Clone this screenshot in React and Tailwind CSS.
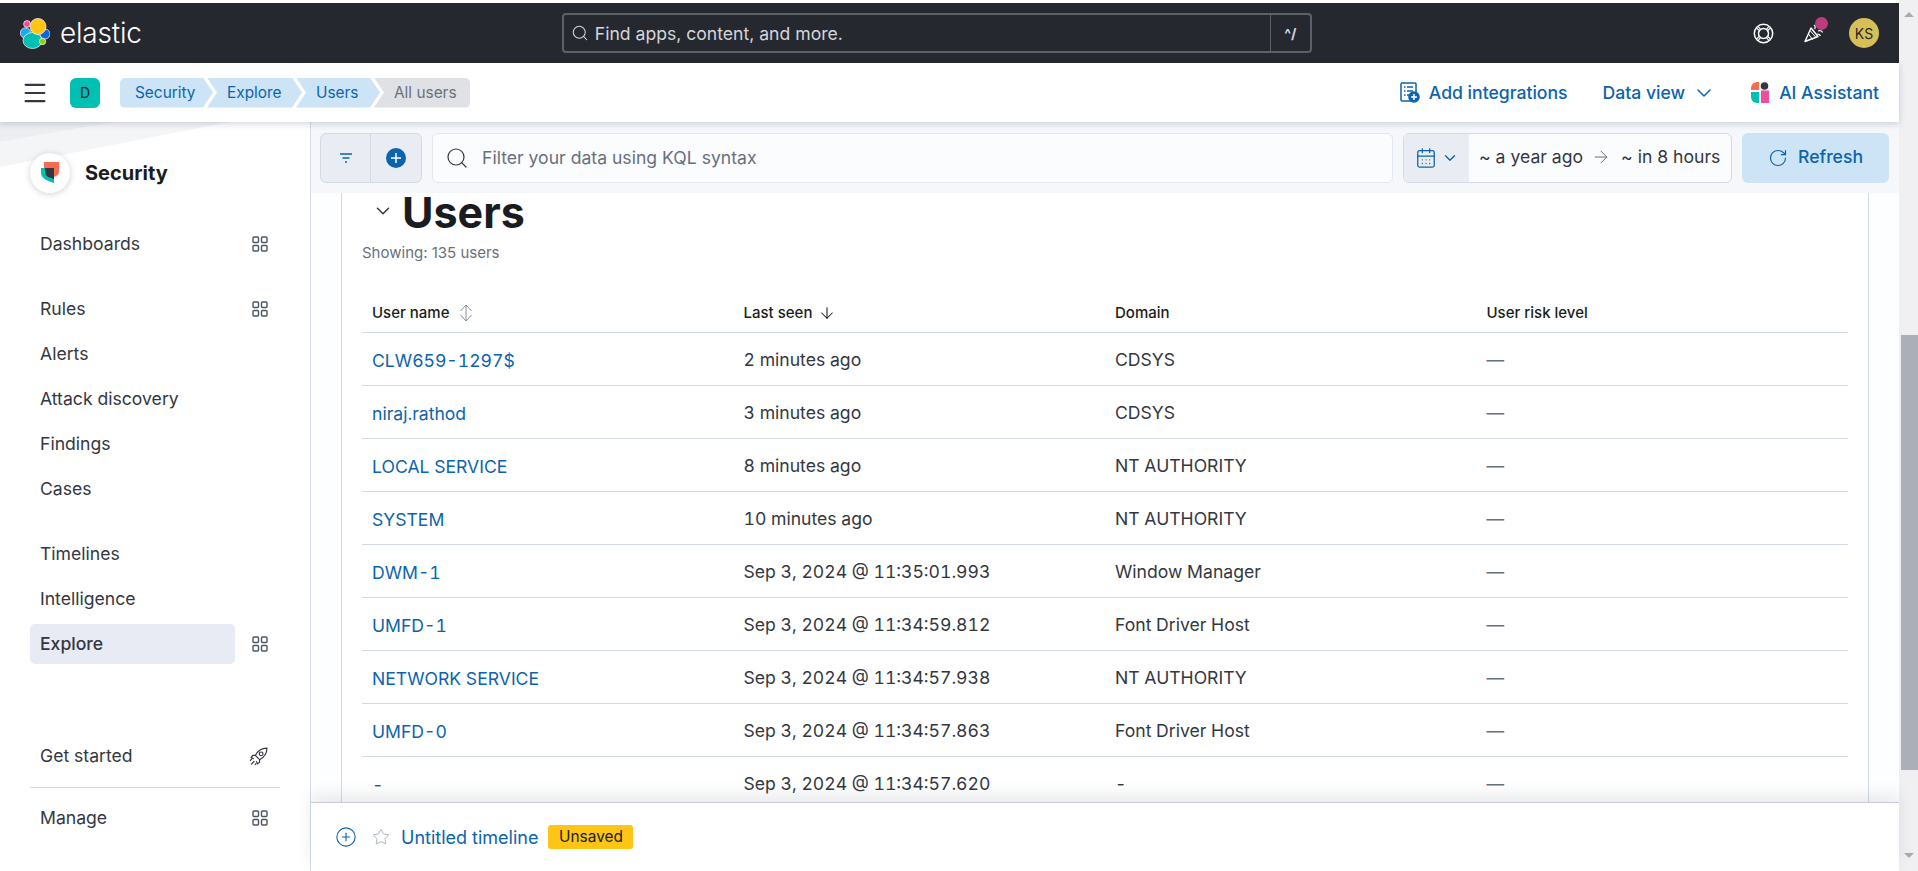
import React from 'react';
import { ChevronDown, CalendarDays, ArrowRight, ArrowDown, RotateCw, Search, Star, CirclePlus, Menu } from 'lucide-react';

const FONT = "font-['Inter','Noto_Sans',sans-serif]";

const users = [
  { name: 'CLW659-1297$', seen: '2 minutes ago', domain: 'CDSYS' },
  { name: 'niraj.rathod', seen: '3 minutes ago', domain: 'CDSYS' },
  { name: 'LOCAL SERVICE', seen: '8 minutes ago', domain: 'NT AUTHORITY' },
  { name: 'SYSTEM', seen: '10 minutes ago', domain: 'NT AUTHORITY' },
  { name: 'DWM-1', seen: 'Sep 3, 2024 @ 11:35:01.993', domain: 'Window Manager' },
  { name: 'UMFD-1', seen: 'Sep 3, 2024 @ 11:34:59.812', domain: 'Font Driver Host' },
  { name: 'NETWORK SERVICE', seen: 'Sep 3, 2024 @ 11:34:57.938', domain: 'NT AUTHORITY' },
  { name: 'UMFD-0', seen: 'Sep 3, 2024 @ 11:34:57.863', domain: 'Font Driver Host' },
  { name: '-', seen: 'Sep 3, 2024 @ 11:34:57.620', domain: '-' },
];

function GridIcon() {
  return (
    <svg width="16" height="16" viewBox="0 0 16 16" fill="none" stroke="#4b5563" strokeWidth="1.4">
      <rect x="1" y="1" width="5.5" height="5.5" rx="1" />
      <rect x="9.5" y="1" width="5.5" height="5.5" rx="1" />
      <rect x="1" y="9.5" width="5.5" height="5.5" rx="1" />
      <rect x="9.5" y="9.5" width="5.5" height="5.5" rx="1" />
    </svg>
  );
}

function RocketIcon() {
  return (
    <svg width="19" height="19" viewBox="0 0 18 18" fill="none" stroke="#343741" strokeWidth="1.1">
      <path d="M17 1c-5 0-9 3-11 7l4 4c4-2 7-6 7-11z" />
      <circle cx="11.5" cy="6.5" r="1.8" />
      <path d="M6 8H3.5L2 10l2.5 1M10 12v2.5L8 16l-1-2.5" />
      <path d="M1 13l2-2M2 16.5l3-3M5.5 17l1.5-1.5" />
    </svg>
  );
}

function ElasticLogo() {
  return (
    <svg width="30" height="32" viewBox="0 0 30 32" stroke="#fff" strokeWidth="0.7">
      <circle cx="7" cy="7" r="3.4" fill="#f04e98" />
      <circle cx="5.5" cy="16" r="5.2" fill="#1ba9f5" />
      <circle cx="25" cy="17" r="5" fill="#0b64dd" />
      <ellipse cx="12.5" cy="23.5" rx="9.5" ry="8" fill="#00bfb3" />
      <circle cx="22.5" cy="24.5" r="3.2" fill="#93c90e" />
      <circle cx="18" cy="9.5" r="8" fill="#fec514" />
    </svg>
  );
}

function SecurityLogo() {
  return (
    <svg width="18" height="22" viewBox="0 0 18 22">
      <path d="M3 0H18V10C18 12 16 14 13 15V6H3z" fill="#f86b4f" />
      <path d="M0 6H13V21C6 19 0 16 0 11z" fill="#00bfb3" />
      <path d="M4 6H13V17L7 15C5 13 4 12 4 10z" fill="#343741" />
    </svg>
  );
}

function AiIcon() {
  return (
    <svg width="18" height="21" viewBox="0 0 18 21">
      <path d="M0 8V6a6 6 0 0 1 6-6h2v8z" fill="#f86b4f" />
      <circle cx="13.5" cy="4" r="3.8" fill="#343741" />
      <path d="M0 10h8v11H6a6 6 0 0 1-6-6z" fill="#00bfb3" />
      <rect x="10" y="8.5" width="8" height="12.5" fill="#f04e98" />
    </svg>
  );
}

function IntegrationsIcon() {
  return (
    <svg width="20" height="21" viewBox="0 0 20 21" fill="none" stroke="#0b64ad" strokeWidth="1.5">
      <rect x="1" y="1" width="15" height="18" rx="1" />
      <path d="M4 5h1.5M7 5h6M4 9h1.5M7 9h6M4 13h1.5M7 13h2" />
      <circle cx="14" cy="15" r="5.8" fill="#0b64ad" stroke="none" />
      <path d="M14 12v6M11 15h6" stroke="#fff" />
    </svg>
  );
}

function LifeRing() {
  return (
    <svg width="21" height="21" viewBox="0 0 21 21" fill="none" stroke="#fff" strokeWidth="1.5">
      <circle cx="10.5" cy="10.5" r="9.2" />
      <circle cx="10.5" cy="10.5" r="5" />
      <path d="M5 3.4l3 3.4M3.4 5l3.4 3M16 3.4l-3 3.4M17.6 5l-3.4 3M5 17.6l3-3.4M3.4 16l3.4-3M16 17.6l-3-3.4M17.6 16l-3.4-3" strokeWidth="1.1" />
    </svg>
  );
}

function PartyIcon() {
  return (
    <svg width="20" height="20" viewBox="0 0 20 20" fill="none" stroke="#fff" strokeWidth="1.4" strokeLinejoin="round">
      <path d="M1 18.5L7 5l7 8.5z" />
      <path d="M4.5 11l4 5.5M6 7.5l6 7" strokeWidth="1" />
      <path d="M10 2c1.5 1 1.5 3 .5 4M14 8c2-1 4 0 4.5 1.5M13 11c1.5 0 3 .5 3.5 2" strokeWidth="1.2" />
    </svg>
  );
}

function SortIcon() {
  return (
    <svg width="14" height="18" viewBox="0 0 14 18" fill="none" stroke="#8a8f99" strokeWidth="1">
      <path d="M7 1v16M7 1L1.5 7M7 1l5.5 6M7 17l-5.5-6M7 17l5.5-6" />
    </svg>
  );
}

function NavItem({ label, grid, icon, active, className = '' }) {
  return (
    <div className={`flex items-center h-10 pl-[30px] pr-[42px] ${className}`}>
      <div className={`flex-1 h-10 flex items-center pl-2.5 rounded-[5px] text-[17.6px] text-[#343741] ${active ? 'bg-[#e8ebf3] font-medium' : ''}`}>
        {label}
      </div>
      <div className="w-[33px] flex justify-end">
        {grid && <GridIcon />}
        {icon}
      </div>
    </div>
  );
}

function Crumb({ label, width, last, first }) {
  if (last) {
    return (
      <div className={`h-[30px] ${width} -ml-1.5 pl-5 pt-px flex items-center rounded-r-[5px] bg-[#e0e1e5] text-[#69707d] text-[15.4px] [clip-path:polygon(0_0,100%_0,100%_100%,0_100%,10px_50%)]`}>
        {label}
      </div>
    );
  }
  return (
    <div className={`h-[30px] ${width} pt-px flex items-center text-[#0b64ad] text-[15.4px] bg-[#cce4f5] ${first ? 'pl-[15px] rounded-l-[5px] [clip-path:polygon(0_0,calc(100%-10px)_0,100%_50%,calc(100%-10px)_100%,0_100%)]' : '-ml-1.5 pl-5 [clip-path:polygon(0_0,calc(100%-10px)_0,100%_50%,calc(100%-10px)_100%,0_100%,10px_50%)]'}`}>
      {label}
    </div>
  );
}

export default function App() {
  return (
    <div className={`${FONT} h-[871px] w-full flex overflow-hidden bg-white`}>
      <div className="flex-1 min-w-0 flex flex-col pt-[3px]">
        {/* Top dark header */}
        <header className="h-[60px] shrink-0 bg-[#25282f] flex items-center pl-5 pr-5 relative">
          <ElasticLogo />
          <span className="ml-2.5 text-[28px] font-light text-white leading-none tracking-[-0.2px]">elastic</span>
          <div className="ml-[420px] w-[750px] h-10 border-2 border-[#5d6068] rounded-[4px] flex items-center text-[#d4d6db]">
            <Search className="w-[18px] h-[18px] ml-[7px] mr-[6px]" strokeWidth={1.4} />
            <span className="flex-1 text-[17.6px] pt-0.5">Find apps, content, and more.</span>
            <span className="w-10 h-full border-l border-[#5d6068] flex items-center justify-center text-[14px] font-bold">^/</span>
          </div>
          <div className="ml-auto flex items-center">
            <LifeRing />
            <div className="relative ml-[30px]">
              <PartyIcon />
              <span className="absolute -top-[6px] -right-[4px] w-[13px] h-[13px] rounded-full bg-[#bd3c7e]" />
            </div>
            <div className="ml-[25px] w-[30px] h-[30px] rounded-full bg-[#d6bf57] flex items-center justify-center text-[14px] text-[#25282f]">KS</div>
          </div>
        </header>

        {/* Breadcrumb bar */}
        <div className="h-[59px] shrink-0 bg-white flex items-center pl-[21px] pr-5 relative z-20 shadow-[0_2px_6px_rgba(60,70,90,0.22)]">
          <Menu className="w-[28px] h-[28px] text-[#343741]" strokeWidth={1.9} />
          <div className="ml-[21px] w-[30px] h-[30px] rounded-[6px] bg-[#00bfb3] flex items-center justify-center text-[14px] text-[#1a1c21]">D</div>
          <div className="ml-5 flex items-center">
            <Crumb label="Security" width="w-[93px]" first />
            <Crumb label="Explore" width="w-[95px]" />
            <Crumb label="Users" width="w-[84px]" />
            <Crumb label="All users" width="w-[96px]" last />
          </div>
          <div className="ml-auto flex items-center text-[17.6px] text-[#0b64ad] font-[450] pt-px">
            <IntegrationsIcon />
            <span className="ml-[9px]">Add integrations</span>
            <span className="ml-[35px]">Data view</span>
            <ChevronDown className="w-[24px] h-[24px] ml-[7px]" strokeWidth={1.5} />
            <span className="ml-[35px] mr-[10px]"><AiIcon /></span>
            <span>AI Assistant</span>
          </div>
        </div>

        <div className="flex-1 min-h-0 flex">
          {/* Sidebar */}
          <aside className="w-[311px] shrink-0 border-r border-[#d3dae6] bg-white relative flex flex-col">
            <svg className="absolute top-0 left-0" width="230" height="45" viewBox="0 0 230 45">
              <path d="M0 20L115 0H230L0 45z" fill="#f4f5f7" />
              <path d="M0 0H115L0 20z" fill="#eceef1" />
            </svg>
            <div className="relative mt-[31px] ml-[30px] flex items-center">
              <div className="w-10 h-10 rounded-full bg-white shadow-[0_1px_6px_rgba(60,70,90,0.25)] flex items-center justify-center">
                <SecurityLogo />
              </div>
              <span className="ml-[15px] text-[20px] font-bold text-[#1a1c21]">Security</span>
            </div>
            <NavItem label="Dashboards" grid className="mt-[31px]" />
            <NavItem label="Rules" grid className="mt-[25px]" />
            <NavItem label="Alerts" className="mt-[5px]" />
            <NavItem label="Attack discovery" className="mt-[5px]" />
            <NavItem label="Findings" className="mt-[5px]" />
            <NavItem label="Cases" className="mt-[5px]" />
            <NavItem label="Timelines" className="mt-[25px]" />
            <NavItem label="Intelligence" className="mt-[5px]" />
            <NavItem label="Explore" grid active className="mt-[5px]" />
            <NavItem label="Get started" icon={<RocketIcon />} className="mt-[72px]" />
            <div className="mt-[11px] ml-[30px] w-[250px] border-t border-[#d3dae6]" />
            <NavItem label="Manage" grid className="mt-[10px]" />
          </aside>

          {/* Main content */}
          <main className="flex-1 min-w-0 flex flex-col relative">
            <div className="h-[71px] shrink-0 bg-[#f5f7fb] flex items-center pl-[9px] pr-[10px] gap-[9px] relative z-10">
              <div className="w-[102px] mr-px h-[50px] flex rounded-[6px] border border-[#d3dae6] bg-[#e9edf3]">
                <div className="w-[50px] border-r border-[#d3dae6] flex items-center justify-center">
                  <svg width="14" height="12" viewBox="0 0 14 12" stroke="#0b64ad" strokeWidth="1.4">
                    <path d="M1 2h12M3.5 6h7M6 10h2" />
                  </svg>
                </div>
                <div className="flex-1 flex items-center justify-center">
                  <div className="w-5 h-5 rounded-full bg-[#0b64ad] flex items-center justify-center">
                    <svg width="12" height="12" viewBox="0 0 12 12" stroke="#fff" strokeWidth="1.5"><path d="M6 1v10M1 6h10" /></svg>
                  </div>
                </div>
              </div>
              <div className="flex-1 h-[50px] rounded-[6px] border border-[#e3e8f0] bg-[#fbfcfd] flex items-center pl-[12px] text-[17.6px] text-[#69707d]">
                <Search className="w-[24px] h-[24px] text-[#343741]" strokeWidth={1.2} />
                <span className="ml-[13px] pt-0.5">Filter your data using KQL syntax</span>
              </div>
              <div className="w-[329px] ml-px mr-px h-[50px] rounded-[6px] border border-[#d3dae6] bg-[#fbfcfd] flex items-center overflow-hidden">
                <div className="w-[65px] h-full bg-[#e9edf3] flex items-center justify-center gap-1 text-[#0b64ad]">
                  <CalendarDays className="w-[22px] h-[22px]" strokeWidth={1.4} />
                  <ChevronDown className="w-[18px] h-[18px]" strokeWidth={1.8} />
                </div>
                <div className="flex-1 flex items-center pl-2.5 text-[17.6px] text-[#343741] whitespace-nowrap">
                  <span>~ a year ago</span>
                  <ArrowRight className="w-5 h-5 mx-2 text-[#69707d]" strokeWidth={1.2} />
                  <span className="ml-0.5">~ in 8 hours</span>
                </div>
              </div>
              <div className="w-[147px] h-[50px] rounded-[6px] bg-[#cce4f5] flex items-center justify-center text-[17.6px] font-medium text-[#0b64ad]">
                <RotateCw className="w-[20px] h-[20px] mr-2.5" strokeWidth={1.4} />
                Refresh
              </div>
            </div>

            <div className="flex-1 min-h-0 overflow-hidden pl-[30px] pr-[30px] bg-[#fdfeff]">
              <section className="border-x border-[#d3dae6] bg-white px-[20px] pb-10">
                <div className="flex items-center h-[39px] pl-[10px]">
                  <ChevronDown className="w-[22px] h-[22px] text-[#343741] -mt-1 shrink-0" strokeWidth={1.6} />
                  <h1 className="ml-[8px] text-[43px] leading-[39px] font-bold text-[#1a1c21]">Users</h1>
                </div>
                <p className="mt-[11px] text-[15px] leading-5 text-[#69707d]">Showing: 135 users</p>
                <table className="mt-[24px] w-full table-fixed border-collapse">
                  <thead>
                    <tr className="h-[45px] border-b border-[#d3dae6] text-left text-[15px] font-medium text-[#1a1c21]">
                      <th className="font-medium pl-2.5 pt-[7px]">
                        <span className="inline-flex items-center gap-2.5">User name <SortIcon /></span>
                      </th>
                      <th className="font-medium pl-2.5 pt-[7px]">
                        <span className="inline-flex items-center gap-1.5">Last seen <ArrowDown className="w-[18px] h-[18px]" strokeWidth={1.4} /></span>
                      </th>
                      <th className="font-medium pl-2.5 pt-[7px]">Domain</th>
                      <th className="font-medium pl-2.5 pt-[7px]">User risk level</th>
                    </tr>
                  </thead>
                  <tbody className="tabular-nums">
                    {users.map(u => (
                      <tr key={u.name} className="h-[53px] border-b border-[#d3dae6] text-[17.6px] text-[#343741]">
                        <td className="pl-2.5 pt-[5px] text-[#0b64ad]">{u.name}</td>
                        <td className="pl-2.5 pt-[3px]">{u.seen}</td>
                        <td className="pl-2.5 pt-[4px]">{u.domain}</td>
                        <td className="pl-2.5 pt-[3px] text-[#69707d]">—</td>
                      </tr>
                    ))}
                  </tbody>
                </table>
              </section>
            </div>

            {/* Timeline bar over the page */}
            <div className="absolute left-0 right-0 bottom-0 h-[69px] bg-white border-t border-[#c9ccd3] flex items-center pl-[24px] shadow-[0_-8px_14px_rgba(60,70,90,0.10)] z-10">
              <CirclePlus className="w-[22px] h-[22px] text-[#0b64ad]" strokeWidth={1.2} />
              <Star className="ml-[15px] w-[18px] h-[18px] text-[#a8afbd]" strokeWidth={1.3} />
              <span className="ml-[11px] text-[18px] text-[#0b64ad]">Untitled timeline</span>
              <span className="ml-2.5 h-6 w-[85px] rounded-[3px] bg-[#fec514] flex items-center justify-center text-[15.4px] text-[#1a1c21]">Unsaved</span>
            </div>
          </main>
        </div>
      </div>

      {/* Window scrollbar */}
      <div className="w-[19px] shrink-0 bg-[#f0f0f3] flex flex-col items-end relative">
        <div className="w-full flex justify-center pt-3">
          <div className="w-0 h-0 border-x-[5px] border-x-transparent border-b-[5px] border-b-[#a8abb3]" />
        </div>
        <div className="mt-[318px] w-[17px] h-[435px] bg-[#abafb8]" />
        <div className="w-full flex justify-center mt-[83px]">
          <div className="w-0 h-0 border-x-[5px] border-x-transparent border-t-[5px] border-t-[#a8abb3]" />
        </div>
      </div>
    </div>
  );
}
